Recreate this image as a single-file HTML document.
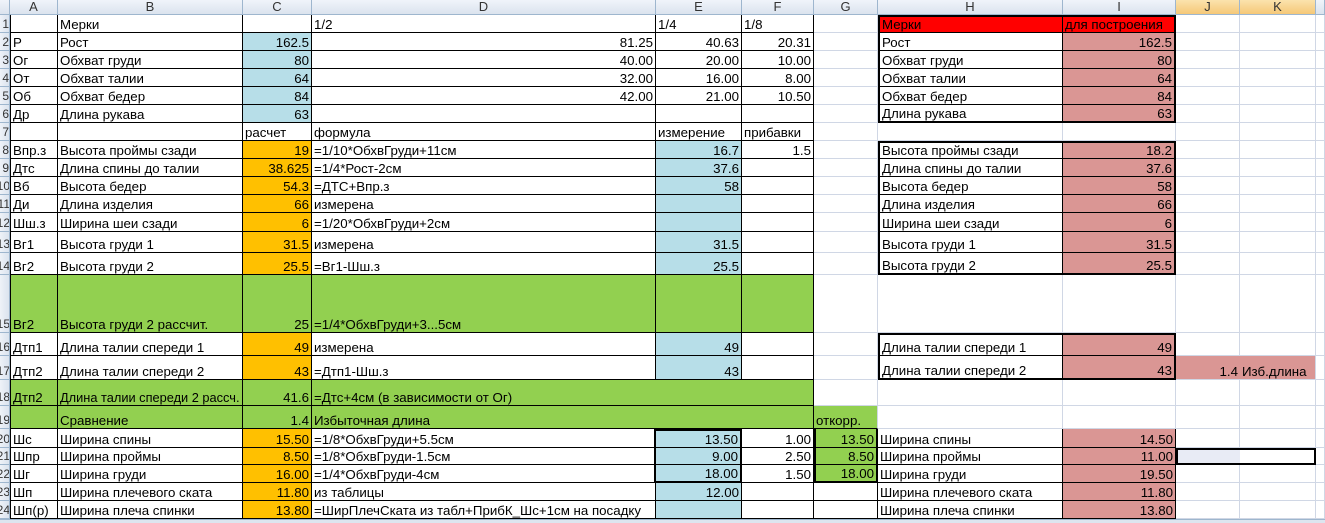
<!DOCTYPE html>
<html><head><meta charset="utf-8"><style>
body{margin:0;width:1325px;height:522px;overflow:hidden;background:#fff;font-family:"Liberation Sans",sans-serif;position:relative}
table{border-collapse:separate;border-spacing:0;table-layout:fixed;position:absolute;left:0;top:0;width:1325px}
td{padding:0 2px;white-space:nowrap;overflow:hidden;font-size:13.3px;color:#000;vertical-align:bottom;border-right:1px solid #d0d7e5;border-bottom:1px solid #d0d7e5;line-height:15px;box-sizing:border-box}
td.b{padding:0 0 0 2px}
tr.h td{background:linear-gradient(#f0f4fa,#dbe3ee);color:#333;text-align:center;vertical-align:middle;border-right:1px solid #9eb6ce;border-bottom:1px solid #9eb6ce;font-size:13px;line-height:14px}
tr.h td.sel{background:linear-gradient(#fbe3ad,#f5c878)}
td.n{background:linear-gradient(90deg,#eef2f8,#dbe3ee);color:#333;font-size:12px;text-align:right;padding:0;border-right:1px solid #9eb6ce;border-bottom:1px solid #9eb6ce;direction:rtl}
td.k{border-right-color:#000;border-bottom-color:#000}
td.A{border-left:1px solid #000}
.r{text-align:right}
.bl{background:#b7dee8}.or{background:#ffc000}.gr{background:#92d050}.pk{background:#da9694}.rd{background:#ff0000}
.L{border-left:2px solid #000!important}.R{border-right:2px solid #000!important}.T{border-top:2px solid #000!important}.B{border-bottom:2px solid #000!important}
</style></head><body>
<table>
<colgroup><col style="width:10px"><col style="width:48px"><col style="width:185px"><col style="width:69px"><col style="width:344px"><col style="width:86px"><col style="width:72px"><col style="width:64px"><col style="width:185px"><col style="width:113px"><col style="width:64px"><col style="width:76px"><col style="width:9px"></colgroup>
<tr class="h" style="height:15px"><td></td><td>A</td><td>B</td><td>C</td><td>D</td><td>E</td><td>F</td><td>G</td><td>H</td><td>I</td><td class="sel">J</td><td class="sel">K</td><td></td></tr>
<tr style="height:18px"><td class="n">1</td><td class="k A"></td><td class="k b">Мерки</td><td class="k"></td><td class="k">1/2</td><td class="k">1/4</td><td class="k">1/8</td><td></td><td class="k rd L T">Мерки</td><td class="k rd R T">для построения</td><td></td><td></td><td></td></tr>
<tr style="height:18px"><td class="n">2</td><td class="k A">Р</td><td class="k b">Рост</td><td class="k bl r">162.5</td><td class="k r">81.25</td><td class="k r">40.63</td><td class="k r">20.31</td><td></td><td class="k L">Рост</td><td class="k pk r R">162.5</td><td></td><td></td><td></td></tr>
<tr style="height:18px"><td class="n">3</td><td class="k A">Ог</td><td class="k b">Обхват груди</td><td class="k bl r">80</td><td class="k r">40.00</td><td class="k r">20.00</td><td class="k r">10.00</td><td></td><td class="k L">Обхват груди</td><td class="k pk r R">80</td><td></td><td></td><td></td></tr>
<tr style="height:18px"><td class="n">4</td><td class="k A">От</td><td class="k b">Обхват талии</td><td class="k bl r">64</td><td class="k r">32.00</td><td class="k r">16.00</td><td class="k r">8.00</td><td></td><td class="k L">Обхват талии</td><td class="k pk r R">64</td><td></td><td></td><td></td></tr>
<tr style="height:18px"><td class="n">5</td><td class="k A">Об</td><td class="k b">Обхват бедер</td><td class="k bl r">84</td><td class="k r">42.00</td><td class="k r">21.00</td><td class="k r">10.50</td><td></td><td class="k L">Обхват бедер</td><td class="k pk r R">84</td><td></td><td></td><td></td></tr>
<tr style="height:18px"><td class="n">6</td><td class="k A">Др</td><td class="k b">Длина рукава</td><td class="k bl r">63</td><td class="k"></td><td class="k"></td><td class="k"></td><td></td><td class="k L B">Длина рукава</td><td class="k pk r R B">63</td><td></td><td></td><td></td></tr>
<tr style="height:18px"><td class="n">7</td><td class="k A"></td><td class="k b"></td><td class="k">расчет</td><td class="k">формула</td><td class="k">измерение</td><td class="k">прибавки</td><td></td><td></td><td></td><td></td><td></td><td></td></tr>
<tr style="height:18px"><td class="n">8</td><td class="k A">Впр.з</td><td class="k b">Высота проймы сзади</td><td class="k or r">19</td><td class="k">=1/10*ОбхвГруди+11см</td><td class="k bl r">16.7</td><td class="k r">1.5</td><td></td><td class="k L T">Высота проймы сзади</td><td class="k pk r R T">18.2</td><td></td><td></td><td></td></tr>
<tr style="height:18px"><td class="n">9</td><td class="k A">Дтс</td><td class="k b">Длина спины до талии</td><td class="k or r">38.625</td><td class="k">=1/4*Рост-2см</td><td class="k bl r">37.6</td><td class="k"></td><td></td><td class="k L">Длина спины до талии</td><td class="k pk r R">37.6</td><td></td><td></td><td></td></tr>
<tr style="height:18px"><td class="n">10</td><td class="k A">Вб</td><td class="k b">Высота бедер</td><td class="k or r">54.3</td><td class="k">=ДТС+Впр.з</td><td class="k bl r">58</td><td class="k"></td><td></td><td class="k L">Высота бедер</td><td class="k pk r R">58</td><td></td><td></td><td></td></tr>
<tr style="height:18px"><td class="n">11</td><td class="k A">Ди</td><td class="k b">Длина изделия</td><td class="k or r">66</td><td class="k">измерена</td><td class="k bl"></td><td class="k"></td><td></td><td class="k L">Длина изделия</td><td class="k pk r R">66</td><td></td><td></td><td></td></tr>
<tr style="height:19px"><td class="n">12</td><td class="k A">Шш.з</td><td class="k b">Ширина шеи сзади</td><td class="k or r">6</td><td class="k">=1/20*ОбхвГруди+2см</td><td class="k bl"></td><td class="k"></td><td></td><td class="k L">Ширина шеи сзади</td><td class="k pk r R">6</td><td></td><td></td><td></td></tr>
<tr style="height:21px"><td class="n">13</td><td class="k A">Вг1</td><td class="k b">Высота груди 1</td><td class="k or r">31.5</td><td class="k">измерена</td><td class="k bl r">31.5</td><td class="k"></td><td></td><td class="k L">Высота груди 1</td><td class="k pk r R">31.5</td><td></td><td></td><td></td></tr>
<tr style="height:22px"><td class="n">14</td><td class="k A">Вг2</td><td class="k b">Высота груди 2</td><td class="k or r">25.5</td><td class="k">=Вг1-Шш.з</td><td class="k bl r">25.5</td><td class="k"></td><td></td><td class="k L B">Высота груди 2</td><td class="k pk r R B">25.5</td><td></td><td></td><td></td></tr>
<tr style="height:58px"><td class="n">15</td><td class="k A gr">Вг2</td><td class="k b gr">Высота груди 2 рассчит.</td><td class="k gr r">25</td><td class="k gr">=1/4*ОбхвГруди+3...5см</td><td class="k gr"></td><td class="k gr"></td><td></td><td></td><td></td><td></td><td></td><td></td></tr>
<tr style="height:23px"><td class="n">16</td><td class="k A">Дтп1</td><td class="k b">Длина талии спереди 1</td><td class="k or r">49</td><td class="k">измерена</td><td class="k bl r">49</td><td class="k"></td><td></td><td class="k L T">Длина талии спереди 1</td><td class="k pk r R T">49</td><td></td><td></td><td></td></tr>
<tr style="height:24px"><td class="n">17</td><td class="k A">Дтп2</td><td class="k b">Длина талии спереди 2</td><td class="k or r">43</td><td class="k">=Дтп1-Шш.з</td><td class="k bl r">43</td><td class="k"></td><td></td><td class="k L B">Длина талии спереди 2</td><td class="k pk r R B">43</td><td class="pk r" style="border-right:none">1.4</td><td class="pk">Изб.длина</td><td></td></tr>
<tr style="height:26px"><td class="n">18</td><td class="k A gr">Дтп2</td><td class="k b gr" style="font-size:12.8px">Длина талии спереди 2 рассч.</td><td class="k gr r">41.6</td><td class="k gr" colspan="3">=Дтс+4см (в зависимости от Ог)</td><td></td><td></td><td></td><td></td><td></td><td></td></tr>
<tr style="height:23px"><td class="n">19</td><td class="k A gr"></td><td class="k b gr">Сравнение</td><td class="k gr r">1.4</td><td class="k gr" colspan="3">Избыточная длина</td><td class="gr" style="border-bottom-color:#000">откорр.</td><td></td><td></td><td></td><td></td><td></td></tr>
<tr style="height:19px"><td class="n">20</td><td class="k A">Шс</td><td class="k b">Ширина спины</td><td class="k or r">15.50</td><td class="k R">=1/8*ОбхвГруди+5.5см</td><td class="k bl r R T">13.50</td><td class="k r">1.00</td><td class="k gr r L R">13.50</td><td class="k">Ширина спины</td><td class="k pk r">14.50</td><td></td><td></td><td></td></tr>
<tr style="height:17px"><td class="n">21</td><td class="k A">Шпр</td><td class="k b">Ширина проймы</td><td class="k or r">8.50</td><td class="k R">=1/8*ОбхвГруди-1.5см</td><td class="k bl r R">9.00</td><td class="k r">2.50</td><td class="k gr r L R">8.50</td><td class="k">Ширина проймы</td><td class="k pk r">11.00</td><td class="L T B" style="background:#e8ebf5;border-right:none"></td><td class="R T B"></td><td></td></tr>
<tr style="height:18px"><td class="n">22</td><td class="k A">Шг</td><td class="k b">Ширина груди</td><td class="k or r">16.00</td><td class="k R">=1/4*ОбхвГруди-4см</td><td class="k bl r R B">18.00</td><td class="k r">1.50</td><td class="k gr r L R B">18.00</td><td class="k">Ширина груди</td><td class="k pk r">19.50</td><td></td><td></td><td></td></tr>
<tr style="height:18px"><td class="n">23</td><td class="k A">Шп</td><td class="k b">Ширина плечевого ската</td><td class="k or r">11.80</td><td class="k">из таблицы</td><td class="k bl r">12.00</td><td class="k"></td><td class="k"></td><td class="k">Ширина плечевого ската</td><td class="k pk r">11.80</td><td></td><td></td><td></td></tr>
<tr style="height:18px"><td class="n">24</td><td class="k A">Шп(р)</td><td class="k b">Ширина плеча спинки</td><td class="k or r">13.80</td><td class="k">=ШирПлечСката из табл+ПрибК_Шс+1см на посадку</td><td class="k bl"></td><td class="k"></td><td class="k"></td><td class="k">Ширина плеча спинки</td><td class="k pk r">13.80</td><td></td><td></td><td></td></tr>
</table>
<div style="position:absolute;left:0;top:519px;width:1325px;height:3px;background:#dde5ef;border-top:1px solid #9eb6ce"></div>
</body></html>
